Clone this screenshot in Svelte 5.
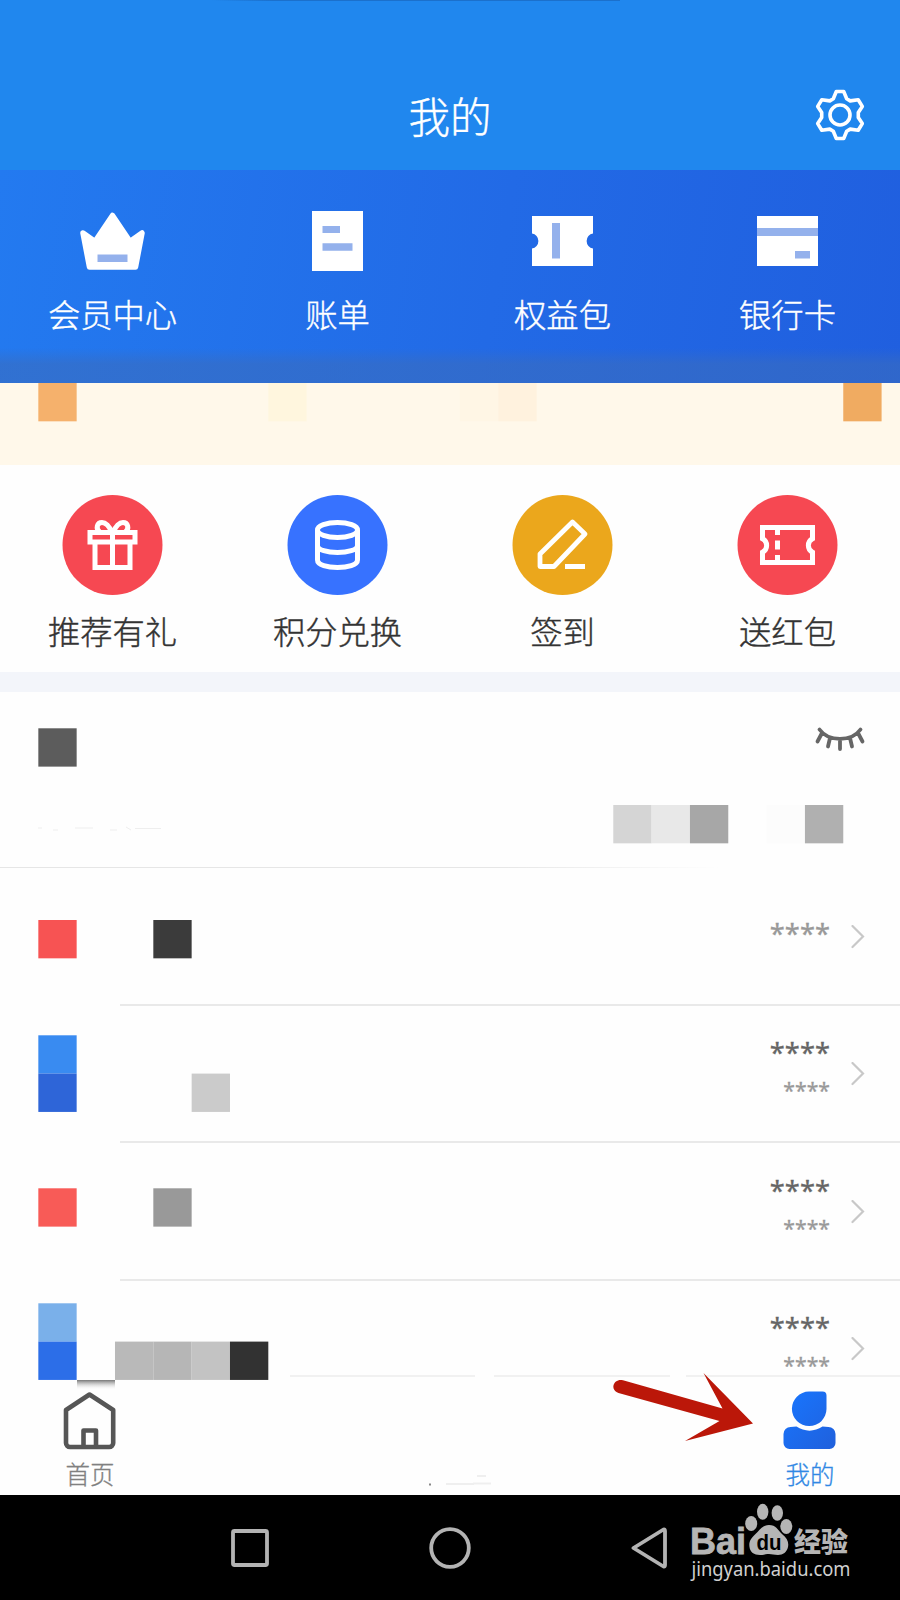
<script>
  // side of one mosaic cell
  const cell = 38.33;

  const menu = [
    { icon: 'crown', name: '会员中心' },
    { icon: 'bill', name: '账单' },
    { icon: 'coupon', name: '权益包' },
    { icon: 'card', name: '银行卡' },
  ];

  const actions = [
    { icon: 'gift', name: '推荐有礼', color: '#f64852' },
    { icon: 'coins', name: '积分兑换', color: '#3772ff' },
    { icon: 'pen', name: '签到', color: '#eba71c' },
    { icon: 'ticket', name: '送红包', color: '#f64852' },
  ];

  // cells are [column, y inside the row, color]
  const rows = [
    { main: '', sub: '****', cells: [[1, 52, '#f75353'], [4, 52, '#3b3b3b']] },
    { main: '****', sub: '****', cells: [[1, 29.3, '#398bf1'], [1, 67.6, '#2e65d8'], [5, 67.6, '#cbcbcb']] },
    { main: '****', sub: '****', cells: [[1, 45.3, '#f85b57'], [4, 45.3, '#999999']] },
    {
      main: '****',
      sub: '****',
      cells: [
        [1, 22.3, '#7ab0ea'], [1, 60.6, '#2c6ee8'],
        [3, 60.6, '#b9b9b9'], [4, 60.6, '#b6b6b6'], [5, 60.6, '#c3c3c3'], [6, 60.6, '#323232'],
      ],
    },
  ];
</script>

{#snippet mosaic(cells)}
  <svg class="mosaic" width="900" height="140">
    {#each cells as [col, y, color]}
      <rect x={col * cell} {y} width={cell} height={cell} fill={color} />
    {/each}
  </svg>
{/snippet}

<div class="screen">
  <header>
    <span class="notch"></span>
    <h1>我的</h1>
    <svg class="gear" width="52" height="52" viewBox="0 0 52 52" fill="none" stroke="#fff" stroke-width="3.6" stroke-linejoin="round">
      <path d="M22.3 2.5h7.4l3 7.3 3.5 2.1 8-1.1 4.1 6.6-4 6.1v5l4 6.1-4.1 6.6-8-1.1-3.5 2.1-3 7.3h-7.4l-3-7.3-3.5-2.1-8 1.1-4.1-6.6 4-6.1v-5l-4-6.1 4.1-6.6 8 1.1 3.5-2.1z" />
      <circle cx="26" cy="26" r="10" />
    </svg>
  </header>

  <nav class="menu">
    {#each menu as item}
      <div class="item">
        <svg width="75" height="75" viewBox="0 0 75 75" fill="#fff">
          {#if item.icon == 'crown'}
            <path d="M37.500 18.500L55 44.500 67 36l-6.500 34h-46L8 36l12 8.500z" stroke="#fff" stroke-width="5.500" stroke-linejoin="round" />
            <path fill="#94b1ec" d="M22.500 57.500h30v7.500h-30z" />
          {:else if item.icon == 'bill'}
            <path d="M12 14h51v60H12z" />
            <path fill="#94b1ec" d="M22.500 29H40v7H22.500zM22.500 46.300h30v7.500h-30z" />
          {:else if item.icon == 'coupon'}
            <path d="M7 19h61v17.500a7.600 7.600 0 0 0 0 15V69H7V51.500a7.600 7.600 0 0 0 0-15z" />
            <path fill="#94b1ec" d="M27 26h8v35.500h-8z" />
          {:else}
            <path d="M7 19h61v50H7z" />
            <path fill="#94b1ec" d="M7 31h61v8H7zM45 54h15v7.500H45z" />
          {/if}
        </svg>
        <span>{item.name}</span>
      </div>
    {/each}
  </nav>

  <section class="banner">
    {@render mosaic([[1, 0, '#f5b16c'], [7, 0, '#fff6de'], [12, 0, '#fff6e5'], [13, 0, '#fff2de'], [22, 0, '#f0ab61']])}
  </section>

  <section class="actions">
    {#each actions as item}
      <div class="item">
        <svg width="101" height="100" viewBox="0 0 101 100" fill="none" stroke="#fff" stroke-width="5">
          <circle cx="50.500" cy="50" r="50" fill={item.color} stroke="none" />
          {#if item.icon == 'gift'}
            <path d="M28 37.500h45V47H28zM33 47v25.500h35V47M50.500 37.500v35" />
            <path d="M49.500 37c-2-6-6-9.500-9.500-9.500-5 0-6.500 6-2.500 9.500M51.500 37c2-6 6-9.500 9.500-9.500 5 0 6.500 6 2.500 9.500" />
          {:else if item.icon == 'coins'}
            <ellipse cx="50.500" cy="35" rx="20" ry="7.500" />
            <path d="M30.500 35v30c0 10 40 10 40 0V35M30.500 50.500c0 9.300 40 9.300 40 0" />
          {:else if item.icon == 'pen'}
            <path d="M60.500 27L73 39 42 71.500H28V59z" stroke-width="4.800" stroke-linejoin="round" />
            <path d="M53 71.500h20" />
          {:else}
            <path d="M25.500 32.500h50v11.300a7.500 7.500 0 0 0 0 13.400v10.300h-50V57.200a7.500 7.500 0 0 0 0-13.400z" />
            <path d="M40.500 33v7M40.500 45.500v9M40.500 60v7" />
          {/if}
        </svg>
        <span>{item.name}</span>
      </div>
    {/each}
  </section>

  <section class="total">
    {@render mosaic([[1, 36.3, '#5c5c5c']])}
    {@render mosaic([[16, 0, '#d5d5d5'], [17, 0, '#e8e8e8'], [18, 0, '#a7a7a7'], [20, 0, '#fcfcfc'], [21, 0, '#b0b0b0']])}
    <svg class="eye" width="52" height="28" viewBox="0 0 52 28" fill="none" stroke="#666" stroke-width="3.800" stroke-linecap="round">
      <path d="M5.500 4.500c9 12.500 32 12.500 41 0M8 8l-4.500 8.500M16 13l-2 8.500M26 15v9M36 13l2 8.500M44 8l4.500 8.500" />
    </svg>
    <svg class="traces" width="130" height="10" fill="none" stroke="#eee">
      <path d="M0 6h4M15 8h5M37 6h18M72 8h7M88 5l5 3M97 6.500h26" />
    </svg>
  </section>

  <main>
    {#each rows as row}
      <div class="row">
        {@render mosaic(row.cells)}
        <div class="values">
          {#if row.main}
            <span class="main">{row.main}</span>
            <span class="sub">{row.sub}</span>
          {:else}
            <span class="main light">{row.sub}</span>
          {/if}
        </div>
        <svg class="chevron" width="14" height="24" viewBox="0 0 14 24" fill="none" stroke="#c8c8c8" stroke-width="2.200" stroke-linecap="round">
          <path d="M1.500 1L12 11.500 1.500 22" />
        </svg>
      </div>
    {/each}
  </main>

  <footer>
    <svg class="edge" width="900" height="32">
      <defs>
        <linearGradient id="smudge" x2="0" y2="1">
          <stop stop-color="#777" />
          <stop offset="1" stop-color="#fff" stop-opacity="0" />
        </linearGradient>
      </defs>
      <path d="M290 1h185M494 1h176M686 1h214" stroke="#f1f1f1" stroke-width="2" />
      <path d="M77 5h38v10H77z" fill="url(#smudge)" />
    </svg>
    <div class="tab home">
      <svg width="56" height="60" viewBox="0 0 56 60" fill="none" stroke="#565656" stroke-width="4.600" stroke-linejoin="round">
        <path d="M27.500 4.500l23.700 15.500V53a4 4 0 0 1-4 4H8a4 4 0 0 1-4-4V20zM21.500 56V40.500H34V56" />
      </svg>
      <span>首页</span>
    </div>
    <svg class="dots" width="70" height="14" stroke="#efefef" stroke-width="2">
      <path d="M17 9h28M44 8.500h18M48 1h9" />
      <path d="M0 9.500h2" stroke="#888" />
    </svg>
    <div class="tab mine">
      <svg width="56" height="60" viewBox="0 0 56 60">
        <defs>
          <linearGradient id="person" x2="1" y2="1">
            <stop stop-color="#1876ff" />
            <stop offset="1" stop-color="#2060dc" />
          </linearGradient>
        </defs>
        <path fill="url(#person)" d="M27 1.500H40.500a4 4 0 0 1 4 4V19a17.300 17.300 0 1 1-17.500-17.500zM8.500 37l6-.5c8 5.500 18 5.500 26 0l6 .5a7 7 0 0 1 7 7v9a6 6 0 0 1-6 6h-40a6 6 0 0 1-6-6v-9a7 7 0 0 1 7-7z" />
      </svg>
      <span>我的</span>
    </div>
    <svg class="arrow" width="204" height="72" viewBox="0 0 204 72">
      <path fill="#bb1709" d="M72 7.200L171.500 35.500 152.500 0 202 50.500 134 68l34.500-20L67.500 20C58 16 63 5 72 7.200z" />
    </svg>
  </footer>

  <div class="system">
    <svg width="38" height="38" fill="none" stroke="#b3b3b3" stroke-width="3.800"><rect x="2" y="2" width="34" height="34" rx="1.500" /></svg>
    <svg width="42" height="42" fill="none" stroke="#b3b3b3" stroke-width="3.800"><circle cx="21" cy="21" r="18.800" /></svg>
    <svg width="36" height="42" fill="none" stroke="#b3b3b3" stroke-width="3.800" stroke-linejoin="round"><path d="M2.500 21L32.500 2.500Q34 2 34 4v34q0 2-1.500 1.500z" /></svg>
    <svg class="brand" width="180" height="95" viewBox="0 0 180 95" fill="#b5b5b5">
      <text x="10" y="59" class="bai" textLength="56" lengthAdjust="spacingAndGlyphs">Bai</text>
      <ellipse cx="71.200" cy="28.500" rx="6" ry="7.500" />
      <ellipse cx="82.700" cy="16.800" rx="5.700" ry="8" />
      <ellipse cx="97.300" cy="18" rx="5.700" ry="7.800" />
      <ellipse cx="106.300" cy="31.500" rx="6" ry="7.500" />
      <path d="M89 30c7 0 9 5 13 9 5 4 7 8 6 13-1 5-5 8-10 8-4 0-6-1-9-1s-5 1-9 1c-6 0-10-3-10.500-8-1-6 2-9 6-13 4-4 7-9 13.500-9z" />
      <text x="76.500" y="54.500" class="du" textLength="25" lengthAdjust="spacingAndGlyphs">du</text>
      <text x="114" y="57" class="exp" textLength="54" lengthAdjust="spacingAndGlyphs">经验</text>
      <text x="11.500" y="80.500" class="url" textLength="159" lengthAdjust="spacingAndGlyphs">jingyan.baidu.com</text>
    </svg>
  </div>
</div>

<style>
:global(body) {
  margin: 0;
}
.screen {
  width: 900px;
  height: 1600px;
  overflow: hidden;
  background: #fefefe;
  font-family: "Noto Sans CJK SC", sans-serif;
  font-weight: 300;
  display: flex;
  flex-direction: column;
}
svg {
  display: block;
  flex: none;
}
header {
  position: relative;
  height: 170px;
  flex: none;
  background: #2087ee;
  color: #fff;
}
.notch {
  position: absolute;
  left: 212px;
  top: 0;
  width: 408px;
  height: 1px;
  background: linear-gradient(90deg, #2087ee, #1b70cc 15%);
}
h1 {
  margin: 0;
  padding-top: 85px;
  line-height: 60px;
  font-size: 41.500px;
  font-weight: 300;
  text-align: center;
  -webkit-text-stroke: .4px currentColor;
}
.gear {
  position: absolute;
  right: 34px;
  top: 89px;
}
.menu {
  height: 213px;
  flex: none;
  box-sizing: border-box;
  padding-top: 27px;
  display: grid;
  grid-template-columns: repeat(4, 1fr);
  color: #fff;
  background: linear-gradient(180deg, transparent 178px, rgba(58, 108, 190, .6) 194px), linear-gradient(100deg, #237af0, #226ae6 55%, #205fdf);
}
.item {
  display: flex;
  flex-direction: column;
  align-items: center;
  font-size: 32.300px;
  line-height: 44px;
  -webkit-text-stroke: .4px currentColor;
}
.menu span {
  margin-top: 19px;
}
.banner {
  height: 82px;
  flex: none;
  background: #fff8ea;
}
.mosaic {
  position: absolute;
  left: 0;
  overflow: visible;
}
.actions {
  height: 207px;
  flex: none;
  box-sizing: border-box;
  padding-top: 30px;
  display: grid;
  grid-template-columns: repeat(4, 1fr);
  color: #333;
}
.actions span {
  margin-top: 13px;
}
.total {
  position: relative;
  height: 196px;
  flex: none;
  box-sizing: border-box;
  border-top: 20px solid #f3f5fa;
  background: linear-gradient(90deg, #e6e6e6 55%, #fefefe 80%) left bottom / 100% 1px no-repeat;
}
.total .mosaic + .mosaic {
  top: 113px;
}
.eye {
  position: absolute;
  right: 34px;
  top: 33px;
}
.traces {
  position: absolute;
  left: 38px;
  top: 130px;
}
main {
  height: 507px;
  flex: none;
}
.row {
  position: relative;
  height: 137.500px;
  display: flex;
  align-items: center;
  justify-content: flex-end;
  gap: 21px;
  padding-right: 35px;
}
.row .mosaic {
  top: 0;
}
.row::after {
  content: "";
  position: absolute;
  left: 120px;
  right: 0;
  bottom: 0;
  height: 2px;
  background: #e9e9e9;
}
.row:last-child::after {
  display: none;
}
.values {
  display: flex;
  flex-direction: column;
  align-items: flex-end;
  padding-bottom: 5px;
  font-family: "Noto Sans", sans-serif;
  font-weight: 400;
  -webkit-text-stroke: .3px currentColor;
}
.main {
  font-size: 27.300px;
  line-height: 40px;
  color: #666;
}
.light {
  color: #999;
}
.sub {
  margin-bottom: 3px;
  font-size: 21.200px;
  line-height: 34px;
  color: #999;
}
footer {
  position: relative;
  height: 120px;
  flex: none;
}
.edge {
  position: absolute;
  left: 0;
  top: 0;
}
.tab {
  position: absolute;
  top: 15px;
  width: 180px;
  display: flex;
  flex-direction: column;
  align-items: center;
  font-size: 24.500px;
  line-height: 34px;
  color: #808080;
  -webkit-text-stroke: .3px currentColor;
}
.tab span {
  margin-top: 7px;
}
.home {
  left: 0;
}
.mine {
  right: 0;
  color: #3088e4;
}
.dots {
  position: absolute;
  left: 429px;
  top: 100px;
}
.arrow {
  position: absolute;
  left: 551px;
  top: -2px;
}
.system {
  position: relative;
  height: 105px;
  flex: none;
  box-sizing: border-box;
  padding-left: 231px;
  display: flex;
  align-items: center;
  gap: 160px;
  background: #000;
}
.brand {
  position: absolute;
  left: 680px;
  top: 0;
}
.bai {
  font: bold 37px "Liberation Sans", sans-serif;
  stroke: #b5b5b5;
  stroke-width: .8px;
}
.du {
  font: bold 22px "Liberation Sans", sans-serif;
  fill: #000;
}
.exp {
  font-size: 27.500px;
  font-weight: 800;
}
.url {
  font: 20px "Noto Sans", sans-serif;
  fill: #d0d0d0;
}
</style>
